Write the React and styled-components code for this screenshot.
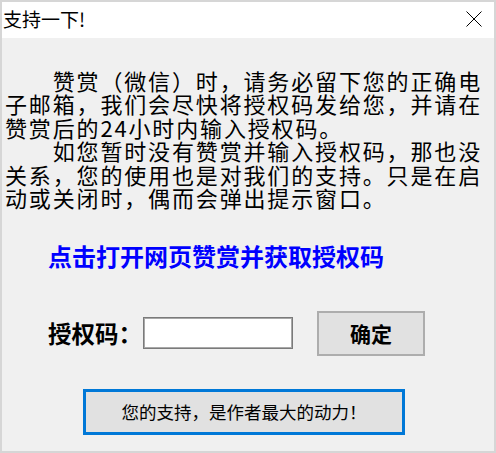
import React from "react";
import styled, { createGlobalStyle } from "styled-components";

const Global = createGlobalStyle`
  html, body { margin: 0; padding: 0; background: #ffffff; }
  body { font-family: "Noto Sans CJK SC", "Microsoft YaHei", sans-serif; color: #000; }
  * { box-sizing: border-box; }
`;

const Window = styled.div`
  width: 496px;
  height: 453px;
  border: 2px solid #d6d6d6;
  background: #f0f0f0;
  display: flex;
  flex-direction: column;
  overflow: hidden;
`;

const TitleBar = styled.div`
  height: 36px;
  flex: none;
  background: #ffffff;
  display: flex;
  align-items: center;
  justify-content: space-between;
  padding: 0 12px 3px 1px;
`;

const Title = styled.span`
  font-size: 19px;
  line-height: 22px;
  color: #000;
`;

const CloseButton = styled.button`
  border: 0;
  background: transparent;
  padding: 0;
  width: 16px;
  height: 16px;
  display: flex;
  align-items: center;
  justify-content: center;
  cursor: pointer;
`;

const Body = styled.div`
  flex: 1;
  display: flex;
  flex-direction: column;
  padding: 31px 0 0 3px;
`;

const Notice = styled.div`
  width: 480px;
  font-size: 22px;
  line-height: 23.4px;
  letter-spacing: 1.85px;
  text-spacing-trim: space-all;
  color: #000;
`;

const Para = styled.p`
  margin: 0;
  text-indent: 47.7px;
`;

const Link = styled.a`
  margin: 32px 0 0 43px;
  align-self: flex-start;
  font-size: 24px;
  line-height: 30px;
  font-weight: 700;
  color: #0000ff;
  text-decoration: none;
  cursor: pointer;
`;

const CodeRow = styled.div`
  margin: 39.5px 0 0 43px;
  height: 45px;
  display: flex;
  align-items: center;
`;

const Label = styled.label`
  font-size: 23.5px;
  line-height: 30px;
  font-weight: 700;
  color: #000;
  width: 95px;
  flex: none;
`;

const CodeInput = styled.input`
  width: 150px;
  height: 32px;
  border: 1px solid #7a7a7a;
  box-shadow: inset 0 0 0 1px #a8a8a8;
  background: #ffffff;
  outline: none;
  padding: 0 4px;
  font-size: 16px;
  font-family: inherit;
`;

const Button = styled.button`
  height: ${(p) => p.$h}px;
  width: ${(p) => p.$w}px;
  background: #e1e1e1;
  border: ${(p) => (p.$focused ? "3px solid #0078d7" : "2px solid #adadad")};
  font-family: "Noto Sans CJK SC", sans-serif;
  font-size: ${(p) => p.$fs}px;
  font-weight: ${(p) => (p.$bold ? 700 : 400)};
  color: #000;
  padding: 0;
  display: flex;
  align-items: center;
  justify-content: center;
  cursor: pointer;
`;

const ConfirmButton = styled(Button)`
  margin-left: 24px;
`;

const SupportButton = styled(Button)`
  margin: 33px 0 0 78px;
`;

export default function App() {
  return (
    <>
      <Global />
      <Window>
        <TitleBar>
          <Title>支持一下!</Title>
          <CloseButton aria-label="关闭">
            <svg width="16" height="16" viewBox="0 0 16 16">
              <path d="M0.5 0.5 L15.5 15.5 M15.5 0.5 L0.5 15.5" stroke="#000" strokeWidth="1" fill="none" />
            </svg>
          </CloseButton>
        </TitleBar>
        <Body>
          <Notice>
            <Para>
              赞赏（微信）时，请务必留下您的正确电子邮箱，我们会尽快将授权码发给您，并请在赞赏后的24小时内输入授权码。
            </Para>
            <Para>
              如您暂时没有赞赏并输入授权码，那也没关系，您的使用也是对我们的支持。只是在启动或关闭时，偶而会弹出提示窗口。
            </Para>
          </Notice>
          <Link>点击打开网页赞赏并获取授权码</Link>
          <CodeRow>
            <Label>授权码：</Label>
            <CodeInput />
            <ConfirmButton $w={108} $h={45} $fs={21} $bold>
              确定
            </ConfirmButton>
          </CodeRow>
          <SupportButton $w={322} $h={46} $fs={17.5} $focused>
            您的支持，是作者最大的动力！
          </SupportButton>
        </Body>
      </Window>
    </>
  );
}
